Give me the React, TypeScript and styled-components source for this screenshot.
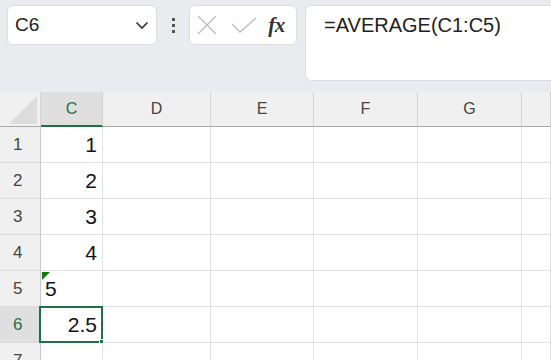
import React from "react";
import styled, { createGlobalStyle, css } from "styled-components";

const Global = createGlobalStyle`
  html, body { margin: 0; padding: 0; background: #e9ebef; overflow: hidden; }
  body { width: 551px; height: 360px; font-family: "Liberation Sans", Arial, sans-serif; }
`;

const Page = styled.div`
  display: flex;
  flex-direction: column;
  width: 551px;
  height: 360px;
  overflow: hidden;
`;

const Toolbar = styled.div`
  display: flex;
  flex-shrink: 0;
  align-items: flex-start;
  padding: 5px 0 0 7px;
  height: 92px;
  box-sizing: border-box;
`;

const NameBox = styled.div`
  width: 150px;
  height: 40px;
  box-sizing: border-box;
  background: #fff;
  border: 1px solid #dcdee2;
  border-radius: 6px;
  display: flex;
  align-items: center;
  justify-content: space-between;
  padding: 0 7px 0 7px;
  font-size: 19px;
  color: #222;
`;

const Dots = styled.div`
  width: 32px;
  height: 40px;
  display: flex;
  flex-direction: column;
  align-items: center;
  justify-content: center;
  gap: 3px;
  span {
    width: 3px;
    height: 3px;
    background: #555;
  }
`;

const FxButtons = styled.div`
  width: 108px;
  height: 40px;
  box-sizing: border-box;
  background: #fff;
  border: 1px solid #dcdee2;
  border-radius: 6px;
  display: flex;
  align-items: center;
  padding: 0 0 0 7px;
`;

const IconSlot = styled.div<{ $w: number }>`
  width: ${(p) => p.$w}px;
  height: 38px;
  display: flex;
  align-items: center;
  justify-content: flex-start;
`;

const FxText = styled.span`
  font-family: "Liberation Serif", "Times New Roman", serif;
  font-style: italic;
  font-weight: bold;
  font-size: 21px;
  color: #333;
  letter-spacing: -0.5px;
`;

const FormulaBar = styled.div`
  flex: 1;
  margin-left: 8px;
  height: 76px;
  box-sizing: border-box;
  background: #fff;
  border: 1px solid #dcdee2;
  border-right: none;
  border-radius: 6px 0 0 6px;
  padding: 6px 0 0 18px;
  font-size: 20px;
  color: #222;
  line-height: 26px;
`;

const Sheet = styled.div`
  display: grid;
  flex-shrink: 0;
  grid-template-columns: 41px 62px 108px 103px 104px 104px 1fr;
  grid-template-rows: 35px;
  grid-auto-rows: 36px;
`;

const ColHead = styled.div<{ $active?: boolean }>`
  box-sizing: border-box;
  background: ${(p) => (p.$active ? "#dfdfdf" : "#f0f0f0")};
  border-right: 1px solid #d4d4d4;
  border-bottom: ${(p) => (p.$active ? "2px solid #1e7145" : "1px solid #a8a8a8")};
  display: flex;
  align-items: center;
  justify-content: center;
  font-size: 16px;
  color: ${(p) => (p.$active ? "#1e7145" : "#444")};
  padding-top: ${(p) => (p.$active ? "1px" : "0")};
`;

const Corner = styled.div`
  box-sizing: border-box;
  background: #f0f0f0;
  border-right: 1px solid #d4d4d4;
  border-bottom: 1px solid #a8a8a8;
  display: flex;
  align-items: flex-end;
  justify-content: flex-end;
  padding: 0 3px 2px 0;
`;

const RowHead = styled.div<{ $active?: boolean }>`
  box-sizing: border-box;
  background: ${(p) => (p.$active ? "#dfdfdf" : "#f0f0f0")};
  border-right: 1px solid #c8c8c8;
  border-bottom: 1px solid #dcdcdc;
  display: flex;
  align-items: center;
  padding-left: 13px;
  font-size: 17px;
  color: ${(p) => (p.$active ? "#1e7145" : "#444")};
`;

const Cell = styled.div<{ $align?: "left" | "right"; $selected?: boolean; $flag?: boolean }>`
  position: relative;
  box-sizing: border-box;
  background: #fff;
  border-right: 1px solid #e1e1e1;
  border-bottom: 1px solid #e1e1e1;
  display: flex;
  align-items: center;
  justify-content: ${(p) => (p.$align === "left" ? "flex-start" : "flex-end")};
  padding: 0 5px 0 4px;
  font-size: 21px;
  color: #111;
  ${(p) =>
    p.$selected &&
    css`
      &::before {
        content: "";
        position: absolute;
        left: -2px;
        top: -1px;
        right: -1px;
        bottom: -1px;
        border: 2px solid #1e7145;
        pointer-events: none;
      }
      &::after {
        content: "";
        position: absolute;
        right: -4px;
        bottom: -4px;
        width: 6px;
        height: 6px;
        background: #1e7145;
        box-shadow: 0 0 0 1px #fff;
      }
    `}
  ${(p) =>
    p.$flag &&
    css`
      &::before {
        content: "";
        position: absolute;
        left: 1px;
        top: 1px;
        width: 0;
        height: 0;
        border-top: 8px solid #107c10;
        border-right: 8px solid transparent;
      }
    `}
`;

const cols = ["C", "D", "E", "F", "G", ""];
const values: Record<number, { v: string; align?: "left" | "right"; flag?: boolean }> = {
  1: { v: "1" },
  2: { v: "2" },
  3: { v: "3" },
  4: { v: "4" },
  5: { v: "5", align: "left", flag: true },
  6: { v: "2.5" },
};

export default function App() {
  return (
    <Page>
      <Global />
      <Toolbar>
        <NameBox>
          <span>C6</span>
          <svg width="14" height="9" viewBox="0 0 14 9">
            <path d="M1.5 1.5 L7 7 L12.5 1.5" fill="none" stroke="#333" strokeWidth="1.6" />
          </svg>
        </NameBox>
        <Dots>
          <span />
          <span />
          <span />
        </Dots>
        <FxButtons>
          <IconSlot $w={34}>
            <svg width="20" height="20" viewBox="0 0 20 20">
              <path d="M1 1 L19 19 M19 1 L1 19" stroke="#bdbdbd" strokeWidth="1.4" fill="none" />
            </svg>
          </IconSlot>
          <IconSlot $w={38}>
            <svg width="26" height="16" viewBox="0 0 26 16">
              <path d="M1 7 L9 15 L25 1" stroke="#bdbdbd" strokeWidth="1.4" fill="none" />
            </svg>
          </IconSlot>
          <IconSlot $w={28}>
            <FxText>fx</FxText>
          </IconSlot>
        </FxButtons>
        <FormulaBar>=AVERAGE(C1:C5)</FormulaBar>
      </Toolbar>
      <Sheet>
        <Corner>
          <svg width="28" height="28" viewBox="0 0 28 28">
            <path d="M28 0 L28 28 L0 28 Z" fill="#dcdcdc" />
          </svg>
        </Corner>
        {cols.map((c, i) => (
          <ColHead key={i} $active={c === "C"}>
            {c}
          </ColHead>
        ))}
        {[1, 2, 3, 4, 5, 6, 7].map((r) => (
          <React.Fragment key={r}>
            <RowHead $active={r === 6}>{r}</RowHead>
            {cols.map((c, i) => {
              const d = i === 0 ? values[r] : undefined;
              return (
                <Cell
                  key={i}
                  $align={d?.align}
                  $flag={d?.flag}
                  $selected={i === 0 && r === 6}
                >
                  {d?.v}
                </Cell>
              );
            })}
          </React.Fragment>
        ))}
      </Sheet>
    </Page>
  );
}
